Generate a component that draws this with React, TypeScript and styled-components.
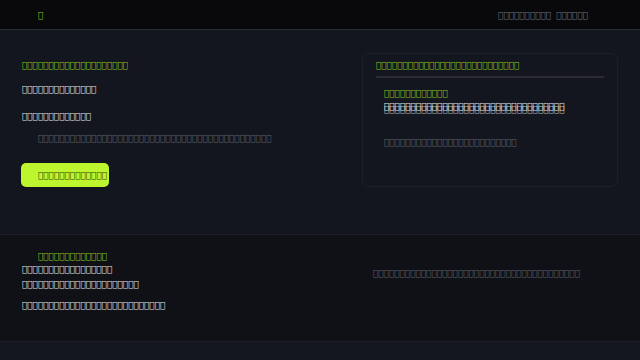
import styled, { createGlobalStyle } from "styled-components";

const GlobalStyle = createGlobalStyle`
  html, body {
    margin: 0;
    padding: 0;
    background: #13161e;
  }
  body {
    font-family: "DejaVu Sans", sans-serif;
    font-size: 8.85px;
  }
`;

const base = Array.from({ length: 80 }, (_, i) => String.fromCharCode(0xe000 + i)).join("");
const t = (n: number, from = 0) => base.slice(from, from + n);

const Page = styled.div`
  display: flex;
  flex-direction: column;
  height: 360px;
  overflow: hidden;
`;

const Header = styled.header`
  height: 29px;
  flex-shrink: 0;
  display: flex;
  align-items: center;
  justify-content: space-between;
  padding: 0 52px 0 38px;
  background: #09090c;
  border-bottom: 1px solid #2a2d34;
`;

const Logo = styled.div`
  color: #8cc424;
`;

const Nav = styled.nav`
  display: flex;
  gap: 5px;
  color: #6b7280;
`;

const Main = styled.main`
  height: 205px;
  flex-shrink: 0;
  box-sizing: border-box;
  display: grid;
  grid-template-columns: 1fr 256px;
  gap: 20px;
  padding: 23px 22px 0;
  border-bottom: 1px solid #1c1f27;
`;

const Column = styled.div`
  display: flex;
  flex-direction: column;
  align-items: flex-start;
`;

const Line = styled.div<{ $tone?: "green" | "white" | "gray"; $mt?: number; $indent?: number }>`
  line-height: 12px;
  white-space: nowrap;
  margin-top: ${(p) => p.$mt ?? 0}px;
  padding-left: ${(p) => p.$indent ?? 0}px;
  color: ${(p) =>
    p.$tone === "green" ? "#8cc424" : p.$tone === "gray" ? "#5d626c" : "#e5e7eb"};
`;

const Doubled = styled(Line)`
  text-shadow: 0 3px 0 rgba(229, 231, 235, 0.75);
`;

const Button = styled.button`
  margin-top: 19px;
  margin-left: -1px;
  width: 88px;
  height: 24px;
  padding: 0 0 0 17px;
  border: none;
  border-radius: 5px;
  background: #bdf52e;
  color: #2d4a05;
  font: inherit;
  text-align: left;
  white-space: nowrap;
  overflow: hidden;
`;

const Card = styled.section`
  box-sizing: border-box;
  height: 134px;
  padding: 5px 13px 0;
  border: 1px solid #1d2029;
  border-radius: 6px;
`;

const Rule = styled.hr`
  margin: 5px 0 0;
  height: 2px;
  border: none;
  background: #2a2c32;
`;

const Bottom = styled.section`
  height: 107px;
  flex-shrink: 0;
  box-sizing: border-box;
  display: grid;
  grid-template-columns: 1fr 245px;
  gap: 20px;
  padding: 15px 22px 0;
  background: #101116;
  border-bottom: 1px solid #1c1f27;
`;

const Footer = styled.footer`
  flex: 1;
  background: #141720;
`;

export default function App() {
  return (
    <>
      <GlobalStyle />
      <Page>
        <Header>
          <Logo>{t(1)}</Logo>
          <Nav>
            <span>{t(10, 40)}</span>
            <span>{t(6, 60)}</span>
          </Nav>
        </Header>

        <Main>
          <Column>
            <Line $tone="green" $mt={6}>{t(20)}</Line>
            <Line $mt={12}>{t(14, 30)}</Line>
            <Line $mt={15}>{t(13, 50)}</Line>
            <Line $tone="gray" $mt={10} $indent={16}>{t(44, 20)}</Line>
            <Button>{t(13, 60)}</Button>
          </Column>

          <Card>
            <Line $tone="green">{t(27, 5)}</Line>
            <Rule />
            <Line $tone="green" $mt={9} $indent={8}>{t(12, 36)}</Line>
            <Doubled $mt={1} $indent={8}>{t(34, 12)}</Doubled>
            <Line $tone="gray" $mt={24} $indent={8}>{t(25, 50)}</Line>
          </Card>
        </Main>

        <Bottom>
          <Column>
            <Line $tone="green" $indent={16}>{t(13, 60)}</Line>
            <Line $mt={1}>{t(17, 2)}</Line>
            <Line $mt={3}>{t(22, 44)}</Line>
            <Line $mt={9}>{t(27, 30)}</Line>
          </Column>
          <Column>
            <Line $tone="gray" $mt={17}>{t(39, 9)}</Line>
          </Column>
        </Bottom>

        <Footer />
      </Page>
    </>
  );
}
